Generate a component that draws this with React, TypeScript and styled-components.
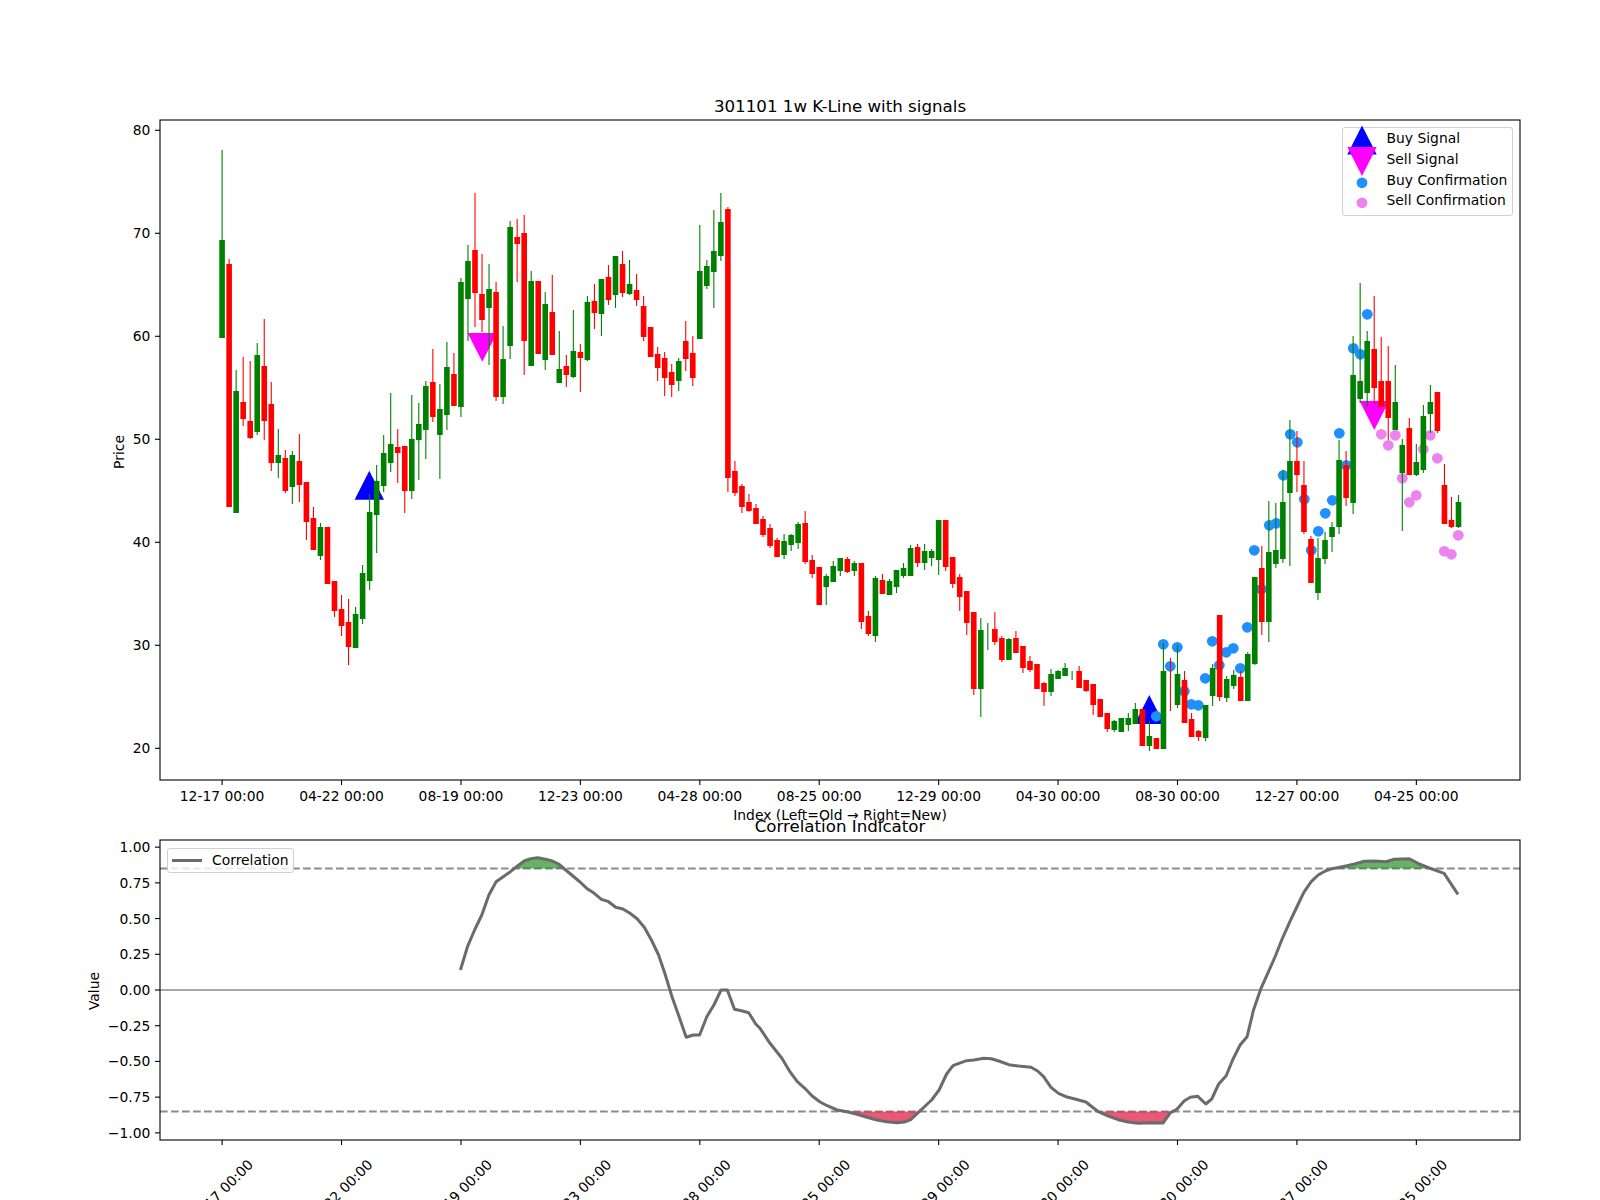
import React from 'react';
import styled, { createGlobalStyle } from 'styled-components';

type Candle = [up: 0 | 1, wickTop: number, bodyTop: number, bodyBottom: number, wickBottom: number];

// all chart data is in figure pixels, both svgs use a viewBox that starts at the axes corner
const candles: Candle[] = [
  [1, 150, 240, 338, 338], [0, 259, 264, 507, 507], [1, 370, 391, 513, 513], [0, 357, 402, 419, 426],
  [0, 361, 421, 438, 439], [1, 343, 355, 432, 435], [0, 319, 366, 421, 440], [0, 382, 404, 463, 471],
  [1, 429, 455, 463, 478], [0, 450, 458, 491, 493], [1, 451, 455, 487, 504], [0, 434, 461, 485, 502],
  [0, 482, 482, 522, 540], [0, 507, 518, 550, 550], [1, 523, 527, 556, 560], [0, 527, 527, 584, 584],
  [0, 581, 581, 611, 617], [0, 595, 609, 626, 636], [0, 599, 622, 647, 665], [1, 607, 614, 648, 648],
  [1, 565, 573, 619, 624], [1, 494, 512, 581, 590], [1, 465, 481, 515, 553], [1, 435, 453, 486, 492],
  [1, 393, 444, 463, 472], [0, 429, 447, 453, 483], [0, 446, 446, 491, 513], [1, 395, 439, 491, 499],
  [1, 403, 424, 440, 480], [1, 381, 386, 430, 459], [0, 349, 382, 417, 422], [1, 384, 409, 435, 479],
  [1, 342, 367, 415, 430], [0, 353, 374, 406, 406], [1, 278, 282, 407, 417], [1, 245, 261, 299, 341],
  [0, 193, 250, 293, 327], [0, 254, 294, 320, 332], [1, 264, 289, 308, 365], [0, 282, 292, 397, 401],
  [1, 326, 359, 397, 404], [1, 221, 227, 346, 359], [0, 219, 237, 244, 282], [0, 215, 233, 341, 375],
  [1, 271, 281, 366, 366], [0, 281, 281, 354, 354], [1, 292, 304, 360, 370], [0, 275, 312, 355, 355],
  [1, 331, 369, 383, 383], [0, 355, 366, 375, 387], [1, 310, 351, 377, 378], [0, 344, 352, 358, 392],
  [1, 296, 302, 360, 361], [0, 284, 301, 313, 329], [1, 279, 279, 314, 336], [0, 265, 277, 300, 305],
  [1, 256, 256, 295, 308], [0, 251, 264, 293, 297], [1, 260, 284, 294, 295], [0, 274, 290, 300, 306],
  [0, 296, 306, 337, 341], [0, 327, 327, 357, 357], [0, 347, 354, 368, 381], [0, 352, 358, 378, 396],
  [0, 364, 372, 385, 397], [1, 358, 361, 381, 391], [0, 321, 341, 359, 371], [0, 336, 353, 378, 386],
  [1, 225, 271, 339, 339], [1, 260, 266, 286, 289], [1, 210, 251, 272, 308], [1, 193, 222, 256, 261],
  [0, 207, 209, 478, 492], [0, 461, 471, 493, 496], [0, 484, 486, 507, 513], [0, 494, 502, 511, 512],
  [0, 504, 508, 524, 524], [0, 516, 519, 535, 537], [0, 524, 528, 546, 548], [0, 538, 540, 557, 557],
  [1, 534, 541, 555, 559], [1, 534, 535, 545, 551], [1, 522, 524, 543, 549], [0, 511, 523, 562, 564],
  [0, 555, 560, 574, 578], [0, 567, 567, 605, 605], [1, 574, 576, 587, 605], [1, 561, 566, 582, 582],
  [1, 558, 558, 571, 576], [0, 557, 559, 572, 573], [1, 561, 563, 571, 576], [0, 563, 563, 622, 629],
  [0, 611, 616, 634, 636], [1, 576, 578, 636, 642], [0, 574, 580, 594, 594], [1, 579, 581, 595, 595],
  [1, 570, 570, 587, 593], [1, 563, 568, 576, 578], [1, 545, 548, 576, 576], [0, 544, 547, 563, 567],
  [1, 544, 551, 563, 570], [1, 549, 551, 558, 566], [1, 520, 520, 560, 575], [0, 520, 520, 567, 571],
  [0, 557, 557, 584, 588], [0, 574, 577, 597, 611], [0, 591, 591, 623, 635], [0, 612, 612, 689, 695],
  [1, 618, 630, 689, 717], [1, 623, 636, 636, 650], [0, 612, 629, 642, 645], [0, 636, 638, 660, 662],
  [1, 638, 639, 660, 660], [0, 631, 638, 653, 653], [0, 646, 646, 668, 673], [0, 656, 661, 670, 672],
  [0, 664, 664, 689, 689], [0, 682, 683, 692, 706], [1, 669, 674, 692, 696], [1, 670, 671, 679, 679],
  [1, 663, 668, 676, 676], [1, 671, 675, 675, 680], [0, 666, 671, 688, 688], [0, 680, 680, 691, 692],
  [0, 684, 684, 705, 715], [0, 699, 699, 717, 717], [0, 713, 713, 729, 732], [1, 720, 721, 730, 732],
  [1, 718, 718, 732, 732], [1, 713, 718, 725, 731], [1, 703, 709, 724, 724], [0, 709, 709, 746, 746],
  [1, 721, 736, 746, 751], [0, 738, 738, 749, 749], [1, 643, 671, 749, 749], [0, 658, 685, 685, 711],
  [1, 645, 674, 705, 708], [0, 671, 680, 723, 723], [0, 713, 719, 737, 737], [0, 730, 731, 737, 741],
  [1, 705, 705, 738, 741], [1, 664, 668, 696, 706], [0, 615, 615, 697, 701], [1, 676, 679, 698, 702],
  [1, 670, 675, 686, 689], [0, 671, 677, 701, 701], [1, 652, 654, 701, 701], [1, 577, 577, 664, 665],
  [0, 546, 568, 622, 635], [1, 501, 552, 622, 642], [1, 503, 550, 564, 568], [1, 470, 502, 559, 563],
  [1, 420, 461, 493, 566], [0, 431, 461, 475, 492], [0, 461, 485, 532, 534], [0, 536, 539, 583, 583],
  [1, 538, 558, 593, 600], [1, 532, 540, 559, 564], [1, 522, 527, 537, 552], [1, 440, 460, 527, 534],
  [0, 451, 465, 498, 506], [1, 336, 375, 503, 514], [1, 283, 381, 399, 403], [1, 331, 341, 393, 407],
  [0, 296, 349, 388, 404], [0, 337, 381, 407, 407], [0, 346, 381, 418, 440], [1, 365, 402, 430, 430],
  [1, 439, 445, 473, 531], [0, 418, 428, 475, 475], [1, 444, 462, 475, 476], [1, 405, 416, 470, 473],
  [1, 385, 402, 414, 433], [0, 392, 392, 431, 433], [0, 464, 485, 524, 524], [0, 497, 520, 527, 528],
  [1, 495, 502, 527, 528],
];

const buyDots = [
  [1156, 716], [1163, 644], [1170, 666], [1177, 647], [1184, 691], [1191, 704], [1198, 705], [1205, 678],
  [1212, 641], [1219, 665], [1226, 652], [1233, 648], [1240, 668], [1247, 627], [1254, 550], [1261, 589],
  [1269, 525], [1276, 523], [1283, 475], [1290, 434], [1297, 442], [1304, 499], [1311, 550], [1318, 531],
  [1325, 513], [1332, 500], [1339, 433], [1346, 465], [1353, 348], [1360, 354], [1367, 314],
];

const sellDots = [
  [1381, 434], [1388, 445], [1395, 435], [1402, 478], [1409, 502], [1416, 495], [1423, 449], [1430, 435],
  [1437, 458], [1444, 551], [1451, 554], [1458, 535],
];

const tickEvery = 17;
const dateLabels = [
  '12-17 00:00', '04-22 00:00', '08-19 00:00', '12-23 00:00', '04-28 00:00', '08-25 00:00',
  '12-29 00:00', '04-30 00:00', '08-30 00:00', '12-27 00:00', '04-25 00:00',
];
const priceTicks = [80, 70, 60, 50, 40, 30, 20];
const corrTicks = ['1.00', '0.75', '0.50', '0.25', '0.00', '−0.25', '−0.50', '−0.75', '−1.00'];

const candleX = (i: number) => 222.1 + 7.025 * i;
const priceY = (p: number) => 130.3 + (80 - p) * 10.3;
const corrY = (v: number) => 990 - v * 142.86;

const traceLeft: [number, number][] = [
  [852, 570], [868, 500], [884, 450], [900, 405], [916, 345], [932, 305], [948, 290], [964, 275], [980, 258],
  [996, 242], [1010, 236], [1025, 233], [1040, 237], [1056, 242], [1072, 252], [1088, 270], [1104, 288],
  [1120, 306], [1136, 326], [1152, 340], [1168, 358], [1184, 365], [1200, 382], [1216, 387], [1232, 400],
  [1248, 416], [1264, 442], [1280, 480], [1296, 525], [1310, 580], [1326, 650], [1342, 710], [1358, 772],
  [1374, 765], [1388, 765], [1404, 710], [1420, 675], [1436, 630], [1450, 630], [1466, 688], [1482, 692],
  [1498, 698], [1514, 733],
];
const traceRight: [number, number][] = [
  [0, 745], [20, 790], [44, 835], [60, 875], [75, 905], [90, 925], [105, 948], [120, 965], [135, 977],
  [155, 990], [175, 995], [195, 1003], [215, 1012], [235, 1020], [255, 1025], [275, 1028], [290, 1026],
  [303, 1019], [320, 995], [345, 960], [360, 930], [375, 882], [388, 857], [400, 850], [415, 842], [430, 840],
  [450, 835], [465, 836], [480, 843], [500, 854], [520, 858], [545, 862], [558, 873], [570, 890], [585, 922],
  [600, 940], [615, 950], [635, 958], [655, 966], [680, 995], [700, 1008], [720, 1019], [740, 1026],
  [760, 1030], [785, 1028], [810, 1029], [825, 998], [838, 988], [853, 962], [865, 952], [880, 949],
  [896, 972], [908, 957], [922, 912], [937, 887], [950, 840], [965, 795], [979, 770], [992, 690], [1007, 625],
  [1022, 575], [1036, 528], [1050, 475], [1065, 425], [1080, 378], [1093, 337], [1108, 305], [1122, 285],
  [1136, 273], [1150, 266], [1165, 262], [1180, 257], [1195, 252], [1215, 244], [1235, 243], [1258, 245],
  [1275, 238], [1305, 236], [1325, 252], [1345, 264], [1375, 280], [1403, 343],
];

const corrPoints = [
  ...traceLeft.map(([x, y]) => [80 + x / 2.24, 780 + y / 3]),
  ...traceRight.map(([x, y]) => [760 + x / 2.01, 780 + y / 3]),
];
const toPath = (pts: number[][]) => pts.map(([x, y]) => `${x.toFixed(1)},${y.toFixed(1)}`).join(' ');
const upperBand = corrY(0.85);
const lowerBand = corrY(-0.85);

const triangle = (cx: number, base: number, tip: number) =>
  `${cx - 14.7},${base} ${cx + 14.7},${base} ${cx},${tip}`;

const GlobalStyle = createGlobalStyle`
  html, body {
    margin: 0;
    background: #fff;
  }
`;

const Figure = styled.div`
  width: 1600px;
  height: 1200px;
  box-sizing: border-box;
  padding: 120px 0 0 160px;
  display: flex;
  flex-direction: column;
  gap: 60px;
  overflow: hidden;
  background: #fff;
  font-family: 'DejaVu Sans', sans-serif;
`;

const Axes = styled.div<{ $height: number }>`
  position: relative;
  width: 1360px;
  height: ${(p) => p.$height}px;
`;

const Plot = styled.svg`
  display: block;
  width: 100%;
  height: 100%;
  overflow: visible;
`;

const Frame = styled.rect`
  fill: none;
  stroke: #000;
  stroke-width: 1.1;
`;

const Tick = styled.line`
  stroke: #000;
  stroke-width: 1.1;
`;

const TickLabel = styled.text`
  font-family: 'DejaVu Sans', sans-serif;
  font-size: 13.89px;
  fill: #000;
`;

const AxisTitle = styled(TickLabel)`
  text-anchor: middle;
`;

const ChartTitle = styled.text`
  font-family: 'DejaVu Sans', sans-serif;
  font-size: 16.67px;
  fill: #000;
  text-anchor: middle;
`;

const Wick = styled.line<{ $up: boolean }>`
  stroke: ${(p) => (p.$up ? '#008000' : '#ff0000')};
  stroke-width: 1.1;
`;

const Body = styled.rect<{ $up: boolean }>`
  fill: ${(p) => (p.$up ? '#008000' : '#ff0000')};
`;

const Band = styled.line`
  stroke: #8c8c8c;
  stroke-width: 2.08;
  stroke-dasharray: 7.7 3.3;
`;

const ZeroLine = styled.line`
  stroke: #a9a9a9;
  stroke-width: 2.08;
`;

const Overbought = styled.polygon`
  fill: #008000;
  fill-opacity: 0.6;
`;

const Oversold = styled.polygon`
  fill: #dc143c;
  fill-opacity: 0.7;
`;

const CorrLine = styled.polyline`
  fill: none;
  stroke: #6b6b6b;
  stroke-width: 3;
  stroke-linejoin: round;
`;

const Legend = styled.div`
  position: absolute;
  box-sizing: border-box;
  background: rgba(255, 255, 255, 0.8);
  border: 1.1px solid #d0d0d0;
  border-radius: 3px;
  font-size: 13.89px;
  color: #000;
`;

const SignalLegend = styled(Legend)`
  top: 7px;
  right: 7px;
  width: 171px;
  height: 89px;
`;

const LegendRow = styled.div`
  display: flex;
  align-items: center;
  height: 20.7px;
`;

const LegendMark = styled.svg`
  flex: none;
  width: 30px;
  height: 20px;
  margin: 0 9.5px 0 4px;
  overflow: visible;
`;

const CorrLegend = styled(Legend)`
  top: 7.5px;
  left: 7px;
  width: 127px;
  height: 25px;
  display: flex;
  align-items: center;
  padding-left: 4px;
`;

const LineSwatch = styled.span`
  flex: none;
  width: 30px;
  height: 3px;
  margin-right: 10px;
  background: #6b6b6b;
`;

const PriceChart = () => (
  <Axes $height={660}>
    <Plot viewBox="160 120 1360 660">
      <polygon points={triangle(369.3, 499.7, 470.7)} fill="#0000ff" />
      <polygon points={triangle(1149.3, 724, 695)} fill="#0000ff" />
      <polygon points={triangle(482.3, 333, 361.7)} fill="#ff00ff" />
      <polygon points={triangle(1374.3, 401, 430)} fill="#ff00ff" />
      {buyDots.map(([x, y]) => (
        <circle key={x} cx={x + 0.3} cy={y + 0.3} r={5.4} fill="#1e90ff" />
      ))}
      {sellDots.map(([x, y]) => (
        <circle key={x} cx={x + 0.3} cy={y + 0.3} r={5.4} fill="#ee82ee" />
      ))}
      {candles.map(([up, wickTop, bodyTop, bodyBottom, wickBottom], i) => (
        <g key={i}>
          <Wick $up={!!up} x1={candleX(i)} x2={candleX(i)} y1={wickTop} y2={wickBottom} />
          <Body $up={!!up} x={candleX(i) - 2.8} y={bodyTop} width={5.6} height={bodyBottom - bodyTop} />
        </g>
      ))}
      <Frame x={160} y={120} width={1360} height={660} />
      {priceTicks.map((p) => (
        <g key={p}>
          <Tick x1={155} x2={160} y1={priceY(p)} y2={priceY(p)} />
          <TickLabel x={150.3} y={priceY(p)} textAnchor="end" dominantBaseline="central">
            {p}
          </TickLabel>
        </g>
      ))}
      {dateLabels.map((label, i) => (
        <g key={label}>
          <Tick x1={candleX(i * tickEvery)} x2={candleX(i * tickEvery)} y1={780} y2={785} />
          <TickLabel x={candleX(i * tickEvery)} y={801} textAnchor="middle">
            {label}
          </TickLabel>
        </g>
      ))}
      <ChartTitle x={840} y={111.7}>
        301101 1w K-Line with signals
      </ChartTitle>
      <AxisTitle x={840} y={820}>
        Index (Left=Old → Right=New)
      </AxisTitle>
      <AxisTitle transform="translate(124 452) rotate(-90)">Price</AxisTitle>
    </Plot>
    <SignalLegend>
      <LegendRow>
        <LegendMark viewBox="-15 -10 30 20">
          <polygon points={triangle(0, 16.5, -12.5)} fill="#0000ff" />
        </LegendMark>
        Buy Signal
      </LegendRow>
      <LegendRow>
        <LegendMark viewBox="-15 -10 30 20">
          <polygon points={triangle(0, -12, 17)} fill="#ff00ff" />
        </LegendMark>
        Sell Signal
      </LegendRow>
      <LegendRow>
        <LegendMark viewBox="-15 -10 30 20">
          <circle cy={2.8} r={5.4} fill="#1e90ff" />
        </LegendMark>
        Buy Confirmation
      </LegendRow>
      <LegendRow>
        <LegendMark viewBox="-15 -10 30 20">
          <circle cy={2.8} r={5.4} fill="#ee82ee" />
        </LegendMark>
        Sell Confirmation
      </LegendRow>
    </SignalLegend>
  </Axes>
);

const CorrelationChart = () => (
  <Axes $height={300}>
    <Plot viewBox="160 840 1360 300">
      <ZeroLine x1={160} x2={1520} y1={corrY(0)} y2={corrY(0)} />
      <Band x1={160} x2={1520} y1={upperBand} y2={upperBand} />
      <Band x1={160} x2={1520} y1={lowerBand} y2={lowerBand} />
      <Overbought points={toPath(corrPoints.map(([x, y]) => [x, Math.min(y, upperBand)]))} />
      <Oversold points={toPath(corrPoints.map(([x, y]) => [x, Math.max(y, lowerBand)]))} />
      <CorrLine points={toPath(corrPoints)} />
      <Frame x={160} y={840} width={1360} height={300} />
      {corrTicks.map((label, i) => (
        <g key={label}>
          <Tick x1={155} x2={160} y1={corrY(1 - i * 0.25)} y2={corrY(1 - i * 0.25)} />
          <TickLabel x={150.3} y={corrY(1 - i * 0.25)} textAnchor="end" dominantBaseline="central">
            {label}
          </TickLabel>
        </g>
      ))}
      {dateLabels.map((label, i) => (
        <g key={label}>
          <Tick x1={candleX(i * tickEvery)} x2={candleX(i * tickEvery)} y1={1140} y2={1145} />
          <TickLabel
            transform={`translate(${candleX(i * tickEvery) - 1.5} 1192) rotate(-45)`}
            textAnchor="middle"
            dominantBaseline="central"
          >
            {label}
          </TickLabel>
        </g>
      ))}
      <ChartTitle x={840} y={831.7}>
        Correlation Indicator
      </ChartTitle>
      <AxisTitle transform="translate(99 991) rotate(-90)">Value</AxisTitle>
    </Plot>
    <CorrLegend>
      <LineSwatch />
      Correlation
    </CorrLegend>
  </Axes>
);

export default function App() {
  return (
    <>
      <GlobalStyle />
      <Figure>
        <PriceChart />
        <CorrelationChart />
      </Figure>
    </>
  );
}
